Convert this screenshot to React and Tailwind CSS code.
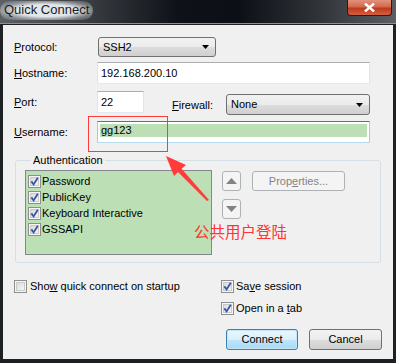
import React from 'react';

// Win7-style checkbox
const Check = ({ checked }) => (
  <svg width="13" height="13" viewBox="0 0 13 13" className="shrink-0">
    <defs>
      <linearGradient id="cbg" x1="0" y1="0" x2="1" y2="1">
        <stop offset="0" stopColor="#d9d9d9" />
        <stop offset="1" stopColor="#f9f9f9" />
      </linearGradient>
    </defs>
    <rect x="0.5" y="0.5" width="12" height="12" fill="#f6f6f6" stroke="#8e8f8f" />
    <rect x="2.5" y="2.5" width="8" height="8" fill="url(#cbg)" stroke="#c9c9c9" />
    {checked && (
      <path d="M3.3 6.4 L5.6 9.4 L9.8 2.8" fill="none" stroke="#3b5aa6" strokeWidth="1.9" />
    )}
  </svg>
);

const Combo = ({ value, className }) => (
  <div
    className={`flex items-center justify-between rounded-[3px] border border-[#707070] bg-[linear-gradient(#f2f2f2_0%,#ebebeb_50%,#dddddd_51%,#cfcfcf_100%)] pl-[4px] pr-[6px] ${className}`}
  >
    <span>{value}</span>
    <svg width="7" height="4" viewBox="0 0 7 4">
      <path d="M0 0 H7 L3.5 4 Z" fill="#000" />
    </svg>
  </div>
);

const TextBox = ({ value, className }) => (
  <div
    className={`flex items-center border border-[#e2e3ea] border-t-[#abadb3] border-b-[#e3e9ef] bg-white pl-[3px] ${className}`}
  >
    {value}
  </div>
);

const ArrowBtn = ({ up }) => (
  <div className="flex h-[20px] w-[19px] items-center justify-center rounded-[3px] border border-[#adb2b5] bg-[#f4f4f4]">
    <svg width="11" height="6" viewBox="0 0 11 6">
      {up ? <path d="M0 6 L5.5 0 L11 6 Z" fill="#838383" /> : <path d="M0 0 L11 0 L5.5 6 Z" fill="#838383" />}
    </svg>
  </div>
);

const Label = ({ k, rest, pre = '' }) => (
  <span>
    {pre}
    <span className="underline">{k}</span>
    {rest}
  </span>
);

export default function App() {
  const methods = ['Password', 'PublicKey', 'Keyboard Interactive', 'GSSAPI'];

  return (
    <div className="flex h-[363px] w-[396px] flex-col bg-[#1d2125] font-['Liberation_Sans',sans-serif] text-[11px] text-black">
      {/* Title bar */}
      <div className="flex h-[24px] items-start justify-between border-b border-[#8a9096] bg-[linear-gradient(90deg,#5c6064_0%,#3a3e43_22%,#0e1218_45%,#0c1016_60%,#2f3338_80%,#5b5f63_100%)]">
        <span className="mt-[1px] rounded-[10px] bg-[radial-gradient(ellipse_at_center,rgba(235,238,240,0.95)_45%,rgba(200,205,210,0.5)_70%,rgba(120,125,130,0)_100%)] px-[4px] pb-[2px] text-[13px] leading-[17px] text-[#1b1b1b]">
          Quick Connect
        </span>
        <div className="mr-[4px] flex h-[16px] w-[45px] items-center justify-center rounded-b-[4px] border border-t-0 border-[#3a1510] bg-[linear-gradient(#e3917c_0%,#d16a4e_45%,#c0391c_55%,#d4603f_100%)]">
          <svg width="11" height="9" viewBox="0 0 11 9">
            <path d="M1 0.5 L10 8.5 M10 0.5 L1 8.5" stroke="#ffffff" strokeWidth="2.4" />
          </svg>
        </div>
      </div>

      {/* Dialog body */}
      <div className="relative mx-[3px] mb-[4px] mt-[1px] flex-1 bg-[#f0f0f0] leading-[13px]">
        {/* Protocol */}
        <div className="mt-[12px] flex h-[20px] items-center pl-[11px]">
          <div className="w-[84px]">
            <Label k="P" rest="rotocol:" />
          </div>
          <Combo value="SSH2" className="h-[20px] w-[118px]" />
        </div>

        {/* Hostname */}
        <div className="mt-[5px] flex h-[22px] items-center pl-[11px]">
          <div className="w-[83px]">
            <Label k="H" rest="ostname:" />
          </div>
          <TextBox value="192.168.200.10" className="h-[22px] w-[273px]" />
        </div>

        {/* Port / Firewall */}
        <div className="mt-[7px] flex h-[22px] items-start pl-[11px]">
          <div className="flex h-[22px] w-[83px] items-center">
            <Label k="P" rest="ort:" />
          </div>
          <TextBox value="22" className="h-[22px] w-[47px]" />
          <div className="ml-[28px] mt-[4px] flex h-[21px] w-[54px] items-center">
            <Label k="F" rest="irewall:" />
          </div>
          <Combo value="None" className="mt-[3px] h-[21px] w-[144px]" />
        </div>

        {/* Username */}
        <div className="mt-[8px] flex h-[22px] items-center pl-[11px]">
          <div className="w-[83px]">
            <Label k="U" rest="sername:" />
          </div>
          <div className="flex h-[22px] w-[273px] flex-col border border-[#a4c9e3] border-t-[#3d7bad] border-b-[#b7d9ed] bg-white p-[2px] pb-0">
            <div className="flex h-[13px] items-center bg-[#bddfb6] pl-[1px]">gg123</div>
          </div>
        </div>

        {/* Authentication group */}
        <fieldset className="mx-[12px] mt-[11px] h-[109px] rounded-[3px] border border-[#d5dfe5] px-[9px] pb-[6px]">
          <legend className="ml-[6px] px-[2px] leading-[13px]">Authentication</legend>
          <div className="mt-[3px] flex items-start">
            <div className="h-[85px] w-[187px] border border-[#828790] bg-[#bddfb6] pl-[2px] pt-[2px]">
              {methods.map((m) => (
                <div key={m} className="flex h-[16px] items-center gap-[1px]">
                  <Check checked />
                  <span>{m}</span>
                </div>
              ))}
            </div>
            <div className="ml-[10px] mt-[1px] flex flex-col gap-[8px]">
              <ArrowBtn up />
              <ArrowBtn />
            </div>
            <div className="ml-[11px] mt-[1px] flex h-[20px] w-[93px] items-center justify-center rounded-[3px] border border-[#adb2b5] bg-[#f4f4f4] text-[#838383]">
              <Label k="e" pre="Prop" rest="rties..." />
            </div>
          </div>
        </fieldset>

        {/* Bottom options */}
        <div className="mt-[17px] flex items-start pl-[11px]">
          <div className="flex w-[207px] items-center gap-[3px]">
            <Check />
            <Label pre="Sho" k="w" rest=" quick connect on startup" />
          </div>
          <div className="flex flex-col gap-[9px]">
            <div className="flex items-center gap-[2px]">
              <Check checked />
              <Label pre="Sa" k="v" rest="e session" />
            </div>
            <div className="flex items-center gap-[2px]">
              <Check checked />
              <Label pre="Open in a " k="t" rest="ab" />
            </div>
          </div>
        </div>

        {/* Buttons */}
        <div className="mt-[14px] flex justify-end gap-[11px] pr-[11px]">
          <div className="flex h-[21px] w-[72px] items-center justify-center rounded-[3px] border border-[#3c7fb1] bg-[linear-gradient(#eaf6fd_0%,#d9f0fc_50%,#bee6fd_51%,#a7d9f5_100%)] shadow-[inset_0_0_0_1px_#c4e5f6]">
            Connect
          </div>
          <div className="flex h-[21px] w-[73px] items-center justify-center rounded-[3px] border border-[#707070] bg-[linear-gradient(#f2f2f2_0%,#ebebeb_50%,#dddddd_51%,#cfcfcf_100%)]">
            Cancel
          </div>
        </div>

        {/* Annotation overlays */}
        <div className="pointer-events-none absolute left-[85px] top-[91px] h-[36px] w-[80px] border-[1.5px] border-[#ff3b3b]" />
        <svg
          className="pointer-events-none absolute left-[150px] top-[125px]"
          width="70"
          height="60"
          viewBox="0 0 70 60"
        >
          <polygon
            points="13,6 33,15 28.6,18.7 56,50 54,51 25,22.1 21,26"
            fill="#ff3b3b"
          />
        </svg>
        <span className="pointer-events-none absolute left-[191px] top-[197px] font-['Noto_Sans_CJK_SC',sans-serif] text-[15.5px] leading-[18px] text-[#ff3434]">
          公共用户登陆
        </span>
      </div>
    </div>
  );
}
